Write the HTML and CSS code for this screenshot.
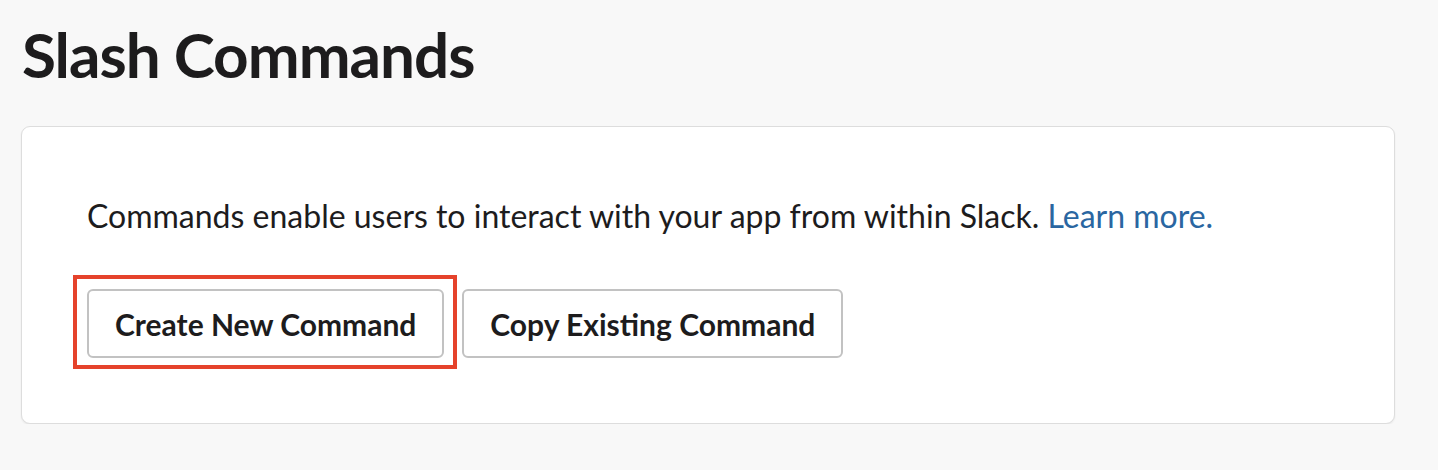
FILE: index.html
```html
<!DOCTYPE html>
<html lang="en">
<head>
<meta charset="utf-8">
<title>Slash Commands</title>
<link rel="stylesheet" href="styles.css">
</head>
<body>
<main class="page">
  <h1 class="title">Slash Commands</h1>
  <section class="card">
    <p class="intro">Commands enable users to interact with your app from within Slack. <a class="link" href="#">Learn more.</a></p>
    <div class="actions">
      <button class="btn btn-highlight" type="button">Create New Command</button>
      <button class="btn" type="button">Copy Existing Command</button>
    </div>
  </section>
</main>
</body>
</html>
```

FILE: styles.css
```css
html, body {
  margin: 0;
  padding: 0;
  background: #f8f8f8;
}
body {
  font-family: Lato, "Noto Sans", sans-serif;
  color: #1d1c1d;
}
.page {
  padding: 16px 43px 0 21px;
}
.title {
  margin: 0 0 0 1px;
  font-size: 62px;
  font-weight: 700;
  line-height: 76px;
  letter-spacing: -1px;
  color: #1d1c1d;
}
.card {
  margin-top: 34px;
  background: #fff;
  border: 1px solid #dddddd;
  border-radius: 9px;
  box-shadow: 0 1px 2px rgba(0, 0, 0, 0.07);
  padding: 69px 65px 65px 65px;
}
.intro {
  margin: 0;
  font-size: 32px;
  line-height: 40px;
}
.link {
  color: #2a66a1;
  text-decoration: none;
}
.actions {
  display: flex;
  gap: 18px;
  margin-top: 53px;
}
.btn {
  position: relative;
  font-family: Lato, "Noto Sans", sans-serif;
  font-size: 30px;
  font-weight: 700;
  color: #1d1c1d;
  background: #fff;
  border: 2px solid #c2c2c2;
  border-radius: 6px;
  height: 69px;
  padding: 0 26px;
  cursor: pointer;
}
.btn-highlight::after {
  content: "";
  position: absolute;
  top: -16px;
  left: -16px;
  right: -15px;
  bottom: -13px;
  border: 4px solid #e5422b;
  pointer-events: none;
}
```
